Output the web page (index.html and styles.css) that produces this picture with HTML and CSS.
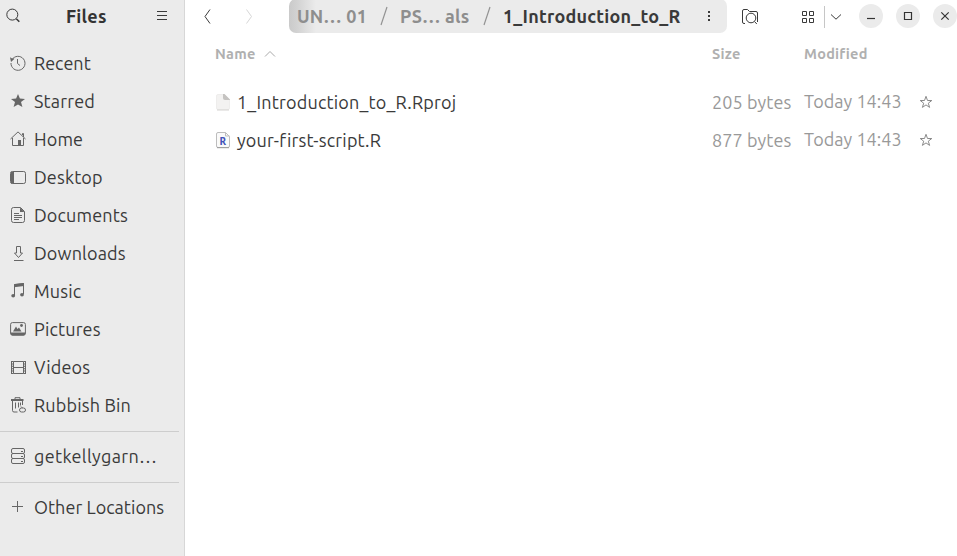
FILE: index.html
```html
<!DOCTYPE html>
<html lang="en">
<head>
<meta charset="utf-8">
<title>Files</title>
<link rel="stylesheet" href="styles.css">
</head>
<body>
<div class="window">
  <aside class="sidebar">
    <header class="side-head">
      <svg class="icon dark" viewBox="0 0 16 16"><circle cx="6.300" cy="6.600" r="5.500"/><path d="M10.300 10.700l3 3" stroke-width="1.600"/></svg>
      <h1>Files</h1>
      <svg class="icon dark" viewBox="0 0 16 16"><path d="M3 3.500h10M3 7.500h10M3 11.500h10"/></svg>
    </header>
    <nav>
      <a class="place"><svg class="icon" viewBox="0 0 16 16"><path d="M2 4.700A7 7 0 1 1 1 8M7.500 4v4.500l2.500 2"/><path class="fill" d="M0 2.200l1.700 1 2.800.5L1 7z"/></svg><span class="t-recent">Recent</span></a>
      <a class="place"><svg class="icon" viewBox="0 0 16 16"><path class="fill" d="M8 .9l1.900 4.700 5.100.3-4 3.200 1.400 5L8 11.400l-4.400 2.700 1.400-5-4-3.200 5.100-.3z"/></svg><span>Starred</span></a>
      <a class="place"><svg class="icon" viewBox="0 0 16 16"><path d="M.5 8L8 .9 15.500 8M2.500 7v7.500h11V7M12.500 4V2.500h1V6"/><path class="fill" d="M8 9h3v5.500H8z"/></svg><span>Home</span></a>
      <a class="place"><svg class="icon" viewBox="0 0 16 16"><rect x=".5" y="2.500" width="15" height="12" rx="1.800"/><path class="fill" d="M1 3h3v11.500H1z"/></svg><span>Desktop</span></a>
      <a class="place"><svg class="icon" viewBox="0 0 16 16"><path d="M3.500 .5h7l4 4V13.500a2 2 0 0 1-2 2H3.500a2 2 0 0 1-2-2V2.500a2 2 0 0 1 2-2zM4 6.500h5M4 8.500h8M4 10.500h8M4 12.500h5"/><path class="fill" d="M10 .5l4.500 4.500H10z"/></svg><span>Documents</span></a>
      <a class="place"><svg class="icon" viewBox="0 0 16 16"><path d="M6.500 1.500h4v6.500h2L8.500 12.500l-4-4.500h2zM4 15.500h9.500"/></svg><span>Downloads</span></a>
      <a class="place"><svg class="icon" viewBox="0 0 16 16"><path d="M4.500 12.500V1.500l9-1V11"/><path class="fill" d="M4 1.200L14 0v3L4 4.200z"/><ellipse class="fill" cx="3.200" cy="12.800" rx="1.900" ry="1.700"/><ellipse class="fill" cx="12" cy="11.700" rx="1.900" ry="1.700"/></svg><span>Music</span></a>
      <a class="place"><svg class="icon" viewBox="0 0 16 16"><rect x=".6" y="1.600" width="14.800" height="12.500" rx="1.800"/><path class="fill" d="M.5 11.500h15v1.500l-1.500 1.500H2L.5 13zM3 10.500l3-5 1.500 2.500L9 6.500l2.500 4z"/><circle class="fill" cx="11.500" cy="4.500" r="1.400"/></svg><span>Pictures</span></a>
      <a class="place"><svg class="icon" viewBox="0 0 16 16"><path d="M3.500 2.500h10v12h-10zM3.500 8.500h10M1.500 2v13M15.500 2v13"/><path stroke-width="2" stroke-dasharray="1 1.400" d="M2.500 2v13M14.500 2v13"/></svg><span>Videos</span></a>
      <a class="place"><svg class="icon" viewBox="0 0 16 16"><path d="M2.500 4v9.500a1.500 1.500 0 0 0 1.500 1.500h3.500M12.500 4v4M5.500 5.500v6M8.500 5.500v5M10.500 5.500v3"/><path stroke-width="2" d="M1 3h12.500"/><path d="M5 2V.7h5V2M11 9.500l1.500 1.500"/><rect x="9.500" y="11" width="6" height="4" rx="2"/></svg><span>Rubbish Bin</span></a>
      <hr>
      <a class="place"><svg class="icon" viewBox="0 0 16 16"><rect x="1.500" y=".5" width="13" height="5" rx="1.500"/><rect x="1.500" y="5.500" width="13" height="5" rx="1.500"/><rect x="1.500" y="10.500" width="13" height="5" rx="1.500"/><path d="M11 3.500h2M11 8.500h2M11 13.500h2"/></svg><span class="t-account">getkellygarn…</span></a>
      <hr>
      <a class="place"><svg class="icon" viewBox="0 0 16 16"><path d="M2 7.500h11M7.500 2v11"/></svg><span class="t-other">Other Locations</span></a>
    </nav>
  </aside>

  <main>
    <header class="toolbar">
      <svg class="icon dark back" viewBox="0 0 16 16"><path d="M10 .5l-5 7 5 7"/></svg>
      <svg class="icon dark forward" viewBox="0 0 16 16"><path d="M5.500 .5l5 7-5 7"/></svg>
      <div class="pathbar">
        <span class="crumb c-one">UN… 01</span><svg class="slash" viewBox="0 0 8 20"><path d="M7 1L1 19"/></svg>
        <span class="crumb c-two">PS… als</span><svg class="slash" viewBox="0 0 8 20"><path d="M7 1L1 19"/></svg>
        <span class="crumb current">1_Introduction_to_R</span>
        <svg class="icon dark dots" viewBox="0 0 16 16"><path class="fill" d="M7 3h2v2H7zM7 7h2v2H7zM7 11h2v2H7z"/></svg>
      </div>
      <svg class="icon dark search-folder" viewBox="0 0 18 16"><path d="M4 14.500H3a1.500 1.500 0 0 1-1.500-1.500V2A1.500 1.500 0 0 1 3 .5h3.500l2 2H15A1.500 1.500 0 0 1 16.500 4v9"/><circle cx="10" cy="9" r="4.800"/><path d="M13.500 12.500l2.300 2.500"/></svg>
      <svg class="icon dark grid-view" viewBox="0 0 16 16"><path d="M2.500 2.500h4v4h-4zM9.500 2.500h4v4h-4zM2.500 9.500h4v4h-4zM9.500 9.500h4v4h-4z"/></svg>
      <i class="divider"></i>
      <svg class="icon dark chevron" viewBox="0 0 16 16"><path d="M3 5.500l5 4.700 5-4.700"/></svg>
      <div class="controls">
        <button><svg viewBox="0 0 24 24"><path d="M8 14.500h8"/></svg></button>
        <button><svg viewBox="0 0 24 24"><path d="M8.500 8.500h7v7h-7z"/></svg></button>
        <button><svg viewBox="0 0 24 24"><path d="M8.300 8.300l7.400 7.400M15.700 8.300l-7.400 7.400"/></svg></button>
      </div>
    </header>

    <section class="files">
      <div class="row head">
        <div class="name-head"><span>Name</span><svg class="sort" viewBox="0 0 12 8"><path d="M1 6.500l5-5 5 5"/></svg></div>
        <span>Size</span><span>Modified</span>
      </div>
      <div class="row">
        <div class="name"><svg class="file" viewBox="0 0 16 18"><path d="M3 1.500h6.500l5 5V15A1.500 1.500 0 0 1 13 16.500H3A1.500 1.500 0 0 1 1.500 15V3A1.500 1.500 0 0 1 3 1.500z" fill="#f3f2f1" stroke="#eeedec"/><path d="M2 17h12" stroke="#d5d3d1"/><path d="M8 1h1.500L15 6.500V7H10a2 2 0 0 1-2-2z" fill="#c5c3c1"/></svg><span>1_Introduction_to_R.Rproj</span></div>
        <span class="size">205 bytes</span><span class="mod">Today 14:43</span>
        <svg class="star" viewBox="0 0 16 16"><path d="M8 2.300l1.500 4.200h4.300l-3.500 2.700 1.300 4.200L8 10.900l-3.600 2.500 1.300-4.200-3.500-2.700h4.300z"/></svg>
      </div>
      <div class="row">
        <div class="name"><svg class="file" viewBox="0 0 16 18"><path d="M3 1.500h7.500l4 4V15A1.500 1.500 0 0 1 13 16.500H3A1.500 1.500 0 0 1 1.500 15V3A1.500 1.500 0 0 1 3 1.500z" fill="#fafafa" stroke="#bdbdbd"/><path d="M2 16.700h12" stroke="#999"/><path d="M10.500 1.500v3.500h4" fill="none" stroke="#bdbdbd"/><text x="4.500" y="13.500">R</text></svg><span>your-first-script.R</span></div>
        <span class="size">877 bytes</span><span class="mod">Today 14:43</span>
        <svg class="star" viewBox="0 0 16 16"><path d="M8 2.300l1.500 4.200h4.300l-3.500 2.700 1.300 4.200L8 10.900l-3.600 2.500 1.300-4.200-3.500-2.700h4.300z"/></svg>
      </div>
    </section>
  </main>
</div>
</body>
</html>
```
FILE: styles.css
```css
* { box-sizing: border-box; }
body {
  margin: 0;
  overflow: hidden;
  background: #fff;
  color: #3a3a3a;
  font: 370 18px/24px Ubuntu, "Noto Sans", sans-serif;
  letter-spacing: .16px;
  white-space: nowrap;
}
svg { display: block; flex: none; fill: none; }
.window { display: grid; grid-template-columns: 185px 1fr; height: 556px; }
.sidebar { background: #ebebeb; border-right: 1px solid #d7d7d7; }
.side-head {
  display: flex; align-items: center;
  height: 44px; padding: 0 14px 12px 6px;
}
h1 { margin: 0 auto 0 44px; font-size: 18px; line-height: 24px; font-weight: 700; letter-spacing: .25px; color: #333; }
.icon { width: 16px; height: 16px; stroke: #666; }
.icon .fill { fill: #666; stroke: none; }
.dark { stroke: #3a3a3a; }
.dark .fill { fill: #3a3a3a; }
.place { display: flex; align-items: center; gap: 8px; height: 38px; padding-left: 10px; }
.t-recent { letter-spacing: 0; }
.t-other { letter-spacing: .04px; }
.t-account { letter-spacing: .35px; }
hr { height: 1px; border: 0; margin: 7px 5px 5px 0; background: #cdcdcd; }

.toolbar { display: flex; align-items: center; height: 33px; padding-left: 15px; }
.forward { margin-left: 25px; opacity: .2; }
.pathbar {
  display: flex; align-items: center;
  width: 438px; height: 34px; margin: -1px 0 0 32px; padding: 0 10px 0 8px;
  border-radius: 7px;
  background: linear-gradient(90deg, #cacaca, #d2d2d2 8px, #ebebeb 27px);
  font-weight: 600; color: #8e8e8e;
}
.crumb { width: 70px; }
.c-one, .c-two { letter-spacing: .25px; }
.slash { width: 8px; height: 20px; margin: 0 12px 0 13px; stroke: #929292; stroke-width: 1.2; }
.current { width: 177px; color: #3a3a3a; letter-spacing: .22px; }
.dots { margin-left: auto; }
.search-folder { width: 18px; margin-left: 14px; }
.grid-view { margin-left: 41px; }
.divider { width: 1px; height: 22px; margin-left: 8px; background: #c6c6c6; }
.chevron { margin-left: 3px; }
.controls { display: flex; gap: 13px; margin: -1px 0 0 15px; }
button { width: 24px; height: 24px; padding: 0; border: 0; border-radius: 50%; background: #ebebeb; }
button svg { width: 24px; height: 24px; stroke: #333; stroke-width: 1.2; }

.row {
  display: grid; grid-template-columns: 497px 92px 114px 16px;
  align-items: center; height: 38px; padding-left: 30px;
}
.head { height: 42px; margin-bottom: 8px; font-size: 14.500px; font-weight: 600; letter-spacing: .25px; color: #b0b0b0; }
.name, .name-head { display: flex; align-items: center; }
.name { gap: 6px; letter-spacing: .2px; }
.sort { width: 12px; height: 8px; margin-left: 8px; stroke: #aaa; }
.file { width: 16px; height: 18px; }
.file text { font: 700 10px "Noto Sans", sans-serif; fill: #4353b8; }
.size, .mod { color: #999; }
.size { letter-spacing: .1px; }
.mod { padding-bottom: 2px; letter-spacing: .03px; }
.star { width: 16px; height: 16px; stroke: #8a8a8a; }
```
